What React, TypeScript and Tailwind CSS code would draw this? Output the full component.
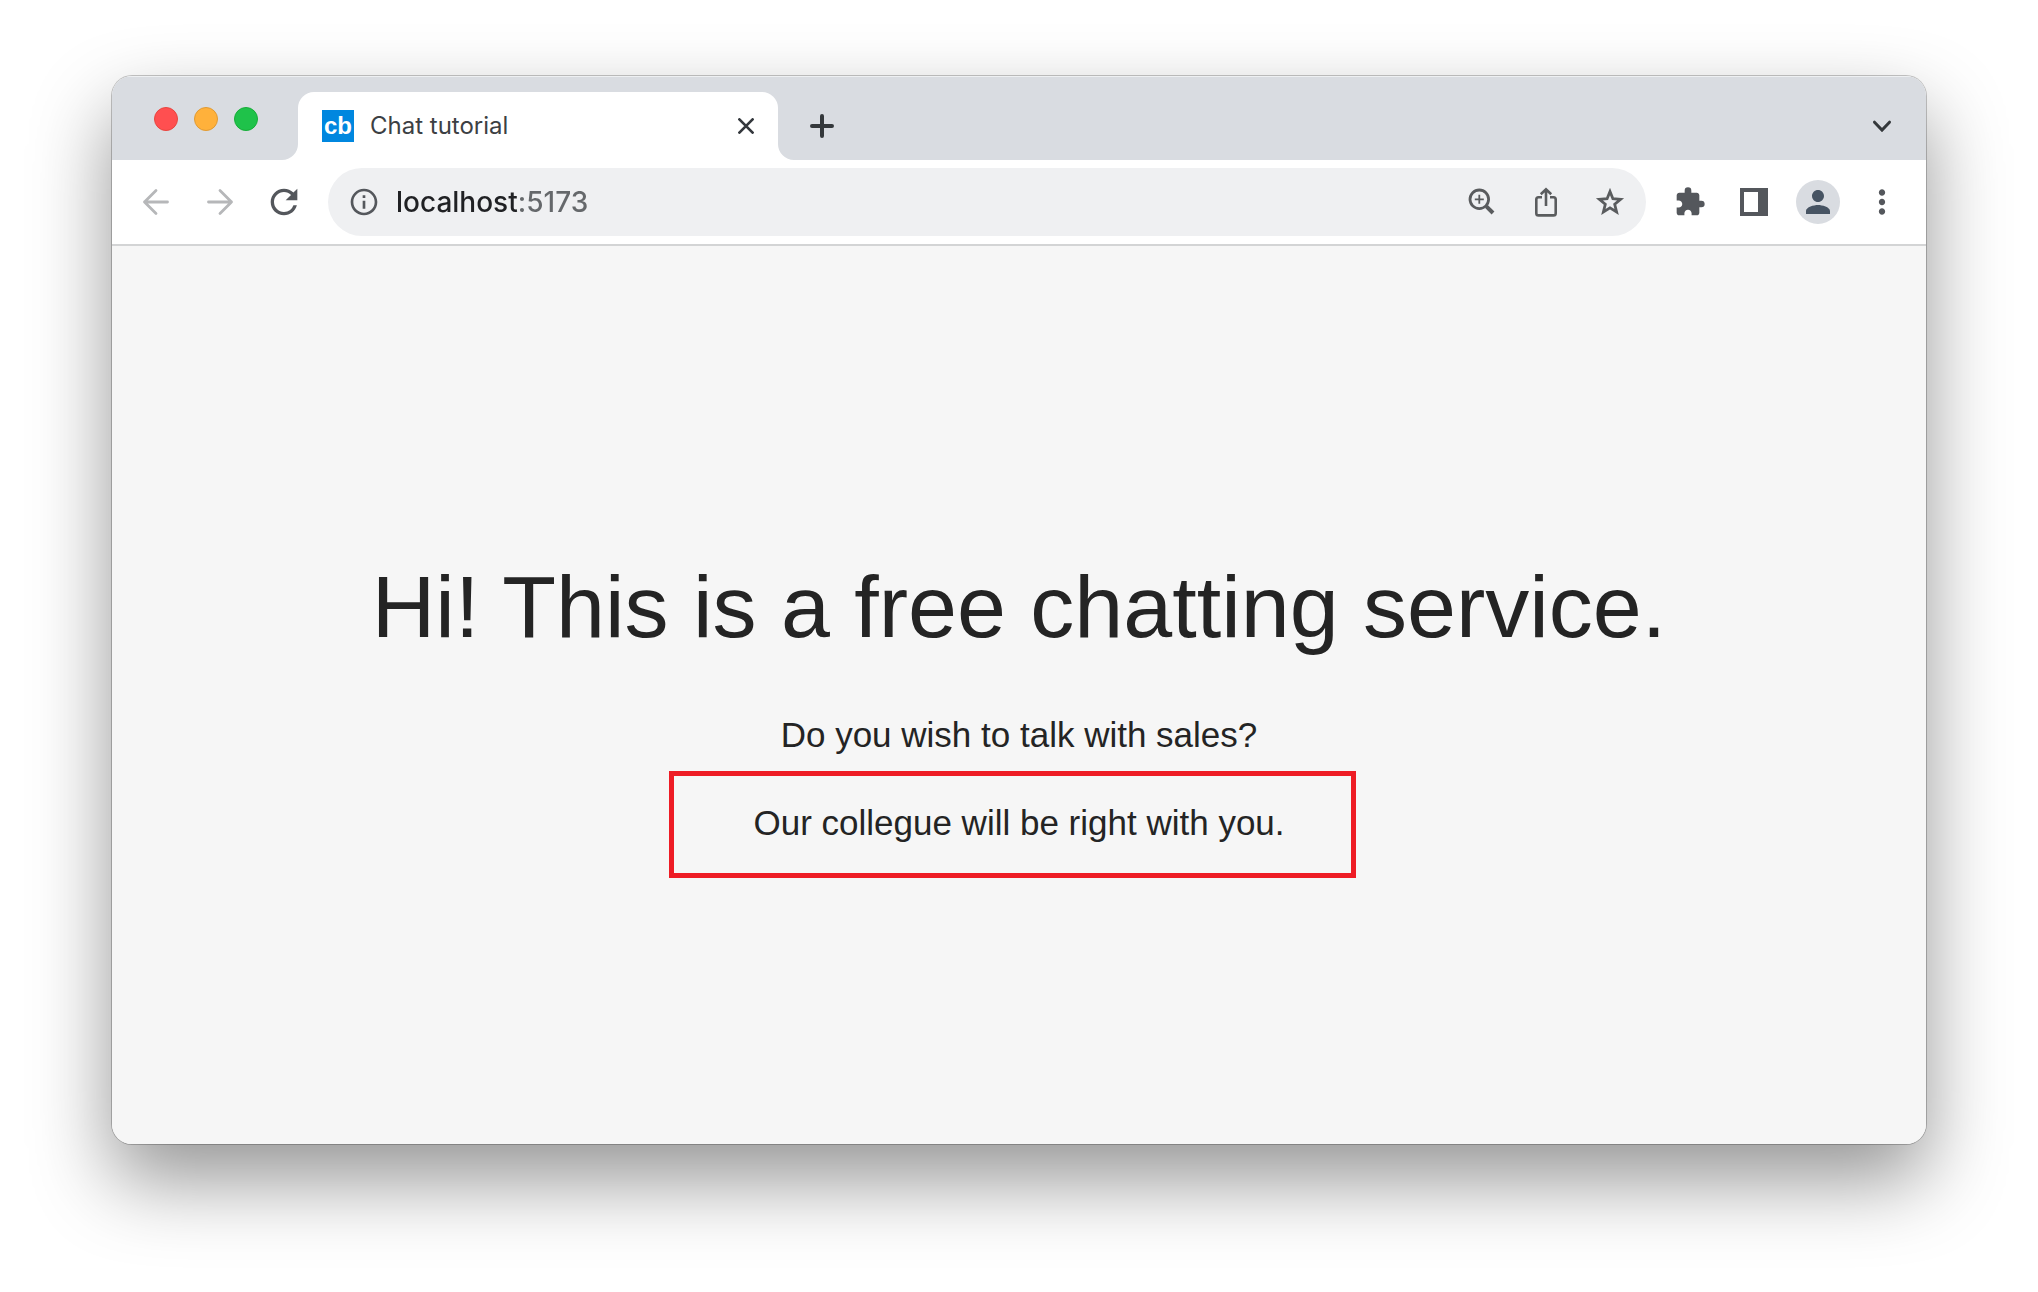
import type { ReactNode } from "react";
import {
  MdExtension,
  MdInfoOutline,
  MdMoreVert,
  MdPerson,
  MdRefresh,
} from "react-icons/md";

function IconButton({ label, children }: { label: string; children: ReactNode }) {
  return (
    <button
      type="button"
      aria-label={label}
      className="flex h-16 w-16 shrink-0 items-center justify-center"
    >
      {children}
    </button>
  );
}

function TrafficLights() {
  return (
    <div className="flex h-full w-[186px] shrink-0 gap-4 pt-[30px] pl-[42px]">
      <button type="button" aria-label="Close window" className="h-6 w-6 rounded-full border border-[#e8453e] bg-[#ff4f50]" />
      <button type="button" aria-label="Minimize window" className="h-6 w-6 rounded-full border border-[#e09a33] bg-[#ffb13b]" />
      <button type="button" aria-label="Zoom window" className="h-6 w-6 rounded-full border border-[#17ad38] bg-[#1fc24a]" />
    </div>
  );
}

function Tab() {
  return (
    <div className="relative flex h-[68px] w-[480px] items-center rounded-t-2xl bg-white pr-6 pl-6">
      <svg viewBox="0 0 16 16" className="absolute bottom-0 -left-4 h-4 w-4" aria-hidden="true">
        <path d="M16 0v16H0A16 16 0 0 0 16 0z" fill="#fff" />
      </svg>
      <svg viewBox="0 0 16 16" className="absolute -right-4 bottom-0 h-4 w-4" aria-hidden="true">
        <path d="M0 0v16h16A16 16 0 0 1 0 0z" fill="#fff" />
      </svg>
      <span className="flex h-8 w-8 items-center justify-center bg-[#0087df] font-['Liberation_Sans',sans-serif] text-2xl leading-8 font-bold text-white">
        cb
      </span>
      <span className="ml-4 flex-1 text-2xl leading-8 text-[#3c4043]">Chat tutorial</span>
      <button type="button" aria-label="Close tab" className="flex h-4 w-4 items-center justify-center">
        <svg viewBox="0 0 16 16" className="h-4 w-4" fill="none" stroke="#34383d" strokeWidth="2.7" strokeLinecap="round">
          <path d="M1.4 1.4l13.2 13.2M14.6 1.4L1.4 14.6" />
        </svg>
      </button>
    </div>
  );
}

function TabStrip() {
  return (
    <div className="flex h-[84px] border-t border-[#eef0f2] bg-[#d9dce1] pr-3">
      <TrafficLights />
      <div className="flex flex-1 items-end">
        <Tab />
        <div className="ml-3 flex h-[68px] items-center">
          <IconButton label="New tab">
            <svg viewBox="0 0 24 24" className="h-6 w-6" fill="none" stroke="#34383b" strokeWidth="4" strokeLinecap="round">
              <path d="M12 2v20M2 12h20" />
            </svg>
          </IconButton>
        </div>
        <div className="ml-auto flex h-[68px] items-center">
          <IconButton label="Search tabs">
            <svg viewBox="0 0 20 14" className="h-3.5 w-5" fill="none" stroke="#34383b" strokeWidth="3" strokeLinecap="round">
              <path d="M2.5 3.2l7.5 7.8 7.5-7.8" />
            </svg>
          </IconButton>
        </div>
      </div>
    </div>
  );
}

function Omnibox() {
  return (
    <div className="mx-3 flex h-[68px] min-w-0 flex-1 items-center rounded-full bg-[#eff0f2] pr-1 pl-5 text-[#5a5c5e]">
      <button type="button" aria-label="View site information" className="flex h-8 w-8 items-center justify-center">
        <MdInfoOutline className="h-8 w-8 text-[#54575c]" />
      </button>
      <input
        type="text"
        aria-label="Address"
        defaultValue="localhost:5173"
        className="ml-4 min-w-0 flex-1 bg-[linear-gradient(90deg,#202124_121px,#65686b_121px)] bg-clip-text text-[28px] leading-9 font-medium text-transparent outline-none"
      />
      <IconButton label="Zoom">
        <svg viewBox="0 0 28 28" className="h-7 w-7" fill="none" stroke="currentColor" strokeWidth="2.8">
          <circle cx="11.3" cy="11.3" r="9.3" />
          <path d="M17.6 17.6l1.8 1.8" />
          <path d="M18.6 18.6l6.4 6.4" strokeWidth="4" />
          <path d="M11.3 6.8v9M6.8 11.3h9" strokeWidth="1.8" />
        </svg>
      </IconButton>
      <IconButton label="Share">
        <svg viewBox="0 0 24 30" className="h-[30px] w-6" fill="none" stroke="currentColor" strokeWidth="2.6">
          <path d="M8 10.3H4.5a2.2 2.2 0 0 0-2.2 2.2v13.7a2.2 2.2 0 0 0 2.2 2.2h15a2.2 2.2 0 0 0 2.2-2.2V12.5a2.2 2.2 0 0 0-2.2-2.2H16" />
          <path d="M12 19V2.5M6.8 7.2L12 2.3l5.2 4.9" />
        </svg>
      </IconButton>
      <IconButton label="Bookmark this tab">
        <svg viewBox="0 0 30 30" className="h-[30px] w-[30px]" fill="none" stroke="currentColor" strokeWidth="2.8" strokeMiterlimit="10">
          <path d="M15 4.5l2.9 7.2 7.7.6-5.9 5 1.9 7.6L15 20.8l-6.6 4.1 1.9-7.6-5.9-5 7.7-.6z" />
        </svg>
      </IconButton>
    </div>
  );
}

function Toolbar() {
  return (
    <div className="flex h-[86px] items-center border-b-2 border-[#d3d4d5] bg-white px-3 text-[#54575c]">
      <IconButton label="Back">
        <svg viewBox="0 0 28 28" className="h-7 w-7" fill="none" stroke="#b6b7b9" strokeWidth="2.8" strokeLinecap="round" strokeLinejoin="round">
          <path d="M25.5 14h-23M14 2.5L2.5 14 14 25.5" />
        </svg>
      </IconButton>
      <IconButton label="Forward">
        <svg viewBox="0 0 28 28" className="h-7 w-7" fill="none" stroke="#b6b7b9" strokeWidth="2.8" strokeLinecap="round" strokeLinejoin="round">
          <path d="M2.5 14h23M14 2.5L25.5 14 14 25.5" />
        </svg>
      </IconButton>
      <IconButton label="Reload">
        <MdRefresh className="h-10 w-10" />
      </IconButton>
      <Omnibox />
      <IconButton label="Extensions">
        <MdExtension className="h-8 w-8" />
      </IconButton>
      <IconButton label="Side panel">
        <svg viewBox="0 0 28 28" className="h-7 w-7" fill="currentColor" fillRule="evenodd">
          <path d="M0 0h28v28H0zM4 4v20h14V4z" />
        </svg>
      </IconButton>
      <IconButton label="Profile">
        <span className="flex h-11 w-11 items-center justify-center rounded-full bg-[#d9dce1]">
          <MdPerson className="h-9 w-9 text-[#475463]" />
        </span>
      </IconButton>
      <IconButton label="Menu">
        <MdMoreVert className="h-[38px] w-[38px]" />
      </IconButton>
    </div>
  );
}

function ChatPage() {
  return (
    <main className="flex flex-1 flex-col items-center justify-center bg-[#f6f6f6] pt-4 text-center font-['Liberation_Sans',Arial,sans-serif] text-[#242424]">
      <h1 className="text-[88px] leading-[96px]">Hi! This is a free chatting service.</h1>
      <p className="mt-14 text-[35px] leading-12">Do you wish to talk with sales?</p>
      <p className="relative mt-10 text-[35px] leading-12">
        Our collegue will be right with you.
        <span className="absolute -top-7 -right-[71px] -bottom-[31px] -left-[84px] border-5 border-[#ee1c25]" />
      </p>
    </main>
  );
}

export default function App() {
  return (
    <div className="flex min-h-screen flex-col bg-white px-28 pt-[76px] pb-[148px] font-[Inter,sans-serif]">
      <div className="flex flex-1 flex-col overflow-hidden rounded-[20px] shadow-[0_0_0_1px_rgba(0,0,0,0.22),0_36px_80px_rgba(0,0,0,0.42)]">
        <TabStrip />
        <Toolbar />
        <ChatPage />
      </div>
    </div>
  );
}
